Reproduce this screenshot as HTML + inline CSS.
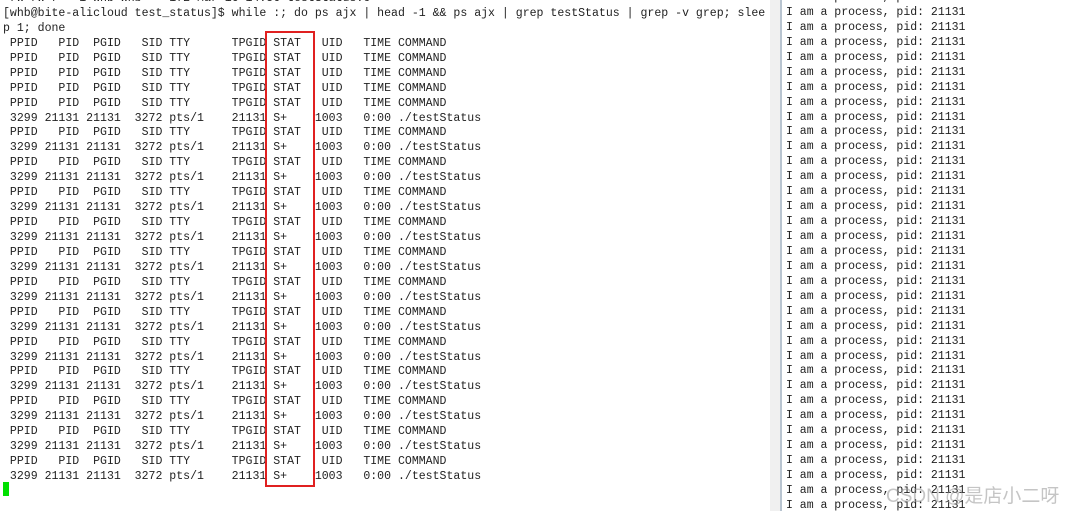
<!DOCTYPE html>
<html><head><meta charset="utf-8"><style>
body{margin:0;width:1066px;height:511px;overflow:hidden;background:#fff;position:relative;font-family:"Liberation Mono",monospace;color:#222}
.l{position:absolute;left:3px;top:-8px;font-size:11.55px;line-height:14.93px;white-space:pre}
.r{position:absolute;left:786px;top:-9px;font-size:11.5px;line-height:14.93px;white-space:pre}
.gap{position:absolute;left:770px;top:0;width:11px;height:511px;background:#f0f0f0}
.bar{position:absolute;left:780px;top:0;width:2px;height:511px;background:#b8c4d0}
.box{position:absolute;left:265px;top:31px;width:46px;height:452px;border:2px solid #e02020}
.cur{position:absolute;left:3px;top:482px;width:6px;height:14px;background:#00e000}
.wm{position:absolute;left:886px;top:481px;white-space:nowrap;font-family:"Liberation Sans","Noto Sans CJK SC",sans-serif;font-size:19px;color:rgba(150,150,150,.55)}
</style></head><body>
<div class="gap"></div><div class="bar"></div>
<div class="l">-rw-rw-r-- 1 whb whb    172 Mar 16 14:56 testStatus.c
[whb@bite-alicloud test_status]$ while :; do ps ajx | head -1 &amp;&amp; ps ajx | grep testStatus | grep -v grep; slee
p 1; done
 PPID   PID  PGID   SID TTY      TPGID STAT   UID   TIME COMMAND
 PPID   PID  PGID   SID TTY      TPGID STAT   UID   TIME COMMAND
 PPID   PID  PGID   SID TTY      TPGID STAT   UID   TIME COMMAND
 PPID   PID  PGID   SID TTY      TPGID STAT   UID   TIME COMMAND
 PPID   PID  PGID   SID TTY      TPGID STAT   UID   TIME COMMAND
 3299 21131 21131  3272 pts/1    21131 S+    1003   0:00 ./testStatus
 PPID   PID  PGID   SID TTY      TPGID STAT   UID   TIME COMMAND
 3299 21131 21131  3272 pts/1    21131 S+    1003   0:00 ./testStatus
 PPID   PID  PGID   SID TTY      TPGID STAT   UID   TIME COMMAND
 3299 21131 21131  3272 pts/1    21131 S+    1003   0:00 ./testStatus
 PPID   PID  PGID   SID TTY      TPGID STAT   UID   TIME COMMAND
 3299 21131 21131  3272 pts/1    21131 S+    1003   0:00 ./testStatus
 PPID   PID  PGID   SID TTY      TPGID STAT   UID   TIME COMMAND
 3299 21131 21131  3272 pts/1    21131 S+    1003   0:00 ./testStatus
 PPID   PID  PGID   SID TTY      TPGID STAT   UID   TIME COMMAND
 3299 21131 21131  3272 pts/1    21131 S+    1003   0:00 ./testStatus
 PPID   PID  PGID   SID TTY      TPGID STAT   UID   TIME COMMAND
 3299 21131 21131  3272 pts/1    21131 S+    1003   0:00 ./testStatus
 PPID   PID  PGID   SID TTY      TPGID STAT   UID   TIME COMMAND
 3299 21131 21131  3272 pts/1    21131 S+    1003   0:00 ./testStatus
 PPID   PID  PGID   SID TTY      TPGID STAT   UID   TIME COMMAND
 3299 21131 21131  3272 pts/1    21131 S+    1003   0:00 ./testStatus
 PPID   PID  PGID   SID TTY      TPGID STAT   UID   TIME COMMAND
 3299 21131 21131  3272 pts/1    21131 S+    1003   0:00 ./testStatus
 PPID   PID  PGID   SID TTY      TPGID STAT   UID   TIME COMMAND
 3299 21131 21131  3272 pts/1    21131 S+    1003   0:00 ./testStatus
 PPID   PID  PGID   SID TTY      TPGID STAT   UID   TIME COMMAND
 3299 21131 21131  3272 pts/1    21131 S+    1003   0:00 ./testStatus
 PPID   PID  PGID   SID TTY      TPGID STAT   UID   TIME COMMAND
 3299 21131 21131  3272 pts/1    21131 S+    1003   0:00 ./testStatus</div>
<div class="r">I am a process, pid: 21131
I am a process, pid: 21131
I am a process, pid: 21131
I am a process, pid: 21131
I am a process, pid: 21131
I am a process, pid: 21131
I am a process, pid: 21131
I am a process, pid: 21131
I am a process, pid: 21131
I am a process, pid: 21131
I am a process, pid: 21131
I am a process, pid: 21131
I am a process, pid: 21131
I am a process, pid: 21131
I am a process, pid: 21131
I am a process, pid: 21131
I am a process, pid: 21131
I am a process, pid: 21131
I am a process, pid: 21131
I am a process, pid: 21131
I am a process, pid: 21131
I am a process, pid: 21131
I am a process, pid: 21131
I am a process, pid: 21131
I am a process, pid: 21131
I am a process, pid: 21131
I am a process, pid: 21131
I am a process, pid: 21131
I am a process, pid: 21131
I am a process, pid: 21131
I am a process, pid: 21131
I am a process, pid: 21131
I am a process, pid: 21131
I am a process, pid: 21131
I am a process, pid: 21131</div>
<div class="box"></div>
<div class="cur"></div>
<div class="wm">CSDN @是店小二呀</div>
</body></html>
